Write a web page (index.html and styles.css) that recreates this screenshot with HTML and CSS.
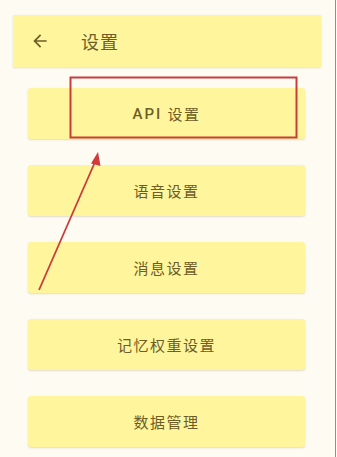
FILE: index.html
```html
<!DOCTYPE html>
<html lang="zh-CN">
<head>
<meta charset="utf-8">
<link rel="stylesheet" href="styles.css">
</head>
<body>
<div class="page">
  <header class="topbar">
    <svg class="back" viewBox="0 0 24 24" width="20" height="20"><path d="M20 11H7.83l5.59-5.59L12 4l-8 8 8 8 1.41-1.41L7.83 13H20v-2z" fill="currentColor"/></svg>
    <span class="title">设置</span>
  </header>
  <main class="menu">
    <div class="item"><span class="latin">API</span> 设置</div>
    <div class="item">语音设置</div>
    <div class="item">消息设置</div>
    <div class="item">记忆权重设置</div>
    <div class="item">数据管理</div>
  </main>
  <svg class="annot" width="337" height="457" viewBox="0 0 337 457">
    <rect x="70.5" y="77.5" width="226" height="60" fill="none" stroke="#c83c3c" stroke-width="2"/>
    <line x1="39" y1="290" x2="95" y2="162" stroke="#c83c3c" stroke-width="1.8"/>
    <polygon points="98,152 91,163.5 100.5,166" fill="#d03a3a"/>
  </svg>
</div>
</body>
</html>
```
FILE: styles.css
```css
html, body {
  margin: 0;
  padding: 0;
  background: #fefbf3;
}
.page {
  position: relative;
  width: 335px;
  height: 457px;
  border-right: 1px solid #8a909c;
  font-family: "Roboto", "Noto Sans CJK SC", sans-serif;
  color: #6e5e26;
  overflow: hidden;
}
.topbar {
  display: flex;
  align-items: center;
  margin: 15px 0 0 13px;
  width: 308px;
  height: 52px;
  background: #fff59d;
  box-shadow: 0 1px 2px rgba(120, 110, 60, 0.2);
}
.back {
  margin-left: 17px;
  color: #6e5e26;
}
.title {
  margin-left: 31px;
  font-size: 18px;
  letter-spacing: 1px;
}
.menu {
  display: flex;
  flex-direction: column;
  gap: 26px;
  margin: 21px 0 0 28px;
  width: 277px;
}
.item {
  height: 51px;
  display: flex;
  align-items: center;
  justify-content: center;
  background: #fff59d;
  border-radius: 3px;
  box-shadow: 0 1px 2px rgba(120, 110, 60, 0.22);
  font-size: 15px;
  letter-spacing: 1.5px;
  white-space: pre;
}
.latin {
  font-weight: 500;
  letter-spacing: 2px;
}
.annot {
  position: absolute;
  left: 0;
  top: 0;
  pointer-events: none;
}
```
